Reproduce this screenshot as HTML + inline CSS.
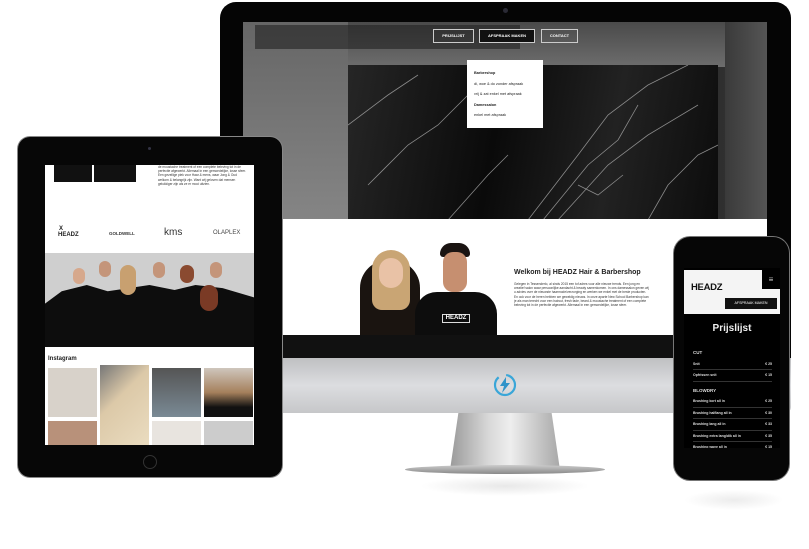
<!DOCTYPE html>
<html><head><meta charset="utf-8"><style>
*{margin:0;padding:0;box-sizing:border-box}
body{width:809px;height:549px;background:#fff;position:relative;overflow:hidden;font-family:"Liberation Sans",sans-serif}
.a{position:absolute}
.t{font-size:3.2px;line-height:4.2px;color:#333}
</style></head><body>

<!-- iMac stand -->
<div class="a" style="left:450px;top:410px;width:110px;height:60px;background:linear-gradient(90deg,#9a9a9a,#d8d8d8 35%,#eeeeee 55%,#a8a8a8);clip-path:polygon(8% 0,92% 0,100% 100%,0 100%)"></div>
<div class="a" style="left:405px;top:465px;width:200px;height:9px;border-radius:50%;background:linear-gradient(#ccc,#888)"></div>
<div class="a" style="left:420px;top:476px;width:170px;height:20px;border-radius:50%;background:radial-gradient(#e8e8e8,#fff 70%)"></div>

<!-- iMac body -->
<div class="a" style="left:220px;top:2px;width:571px;height:358px;background:#050505;border-radius:16px 16px 0 0"></div>
<div class="a" style="left:220px;top:358px;width:571px;height:55px;background:linear-gradient(#bfc0c2,#dcdde0 50%,#c6c7c9);border-radius:0 0 6px 6px"></div>
<div class="a" style="left:503px;top:8px;width:5px;height:5px;border-radius:50%;background:#2a2a35"></div>
<svg class="a" style="left:493px;top:373px" width="24" height="24" viewBox="0 0 24 24"><circle cx="12" cy="12" r="10" fill="none" stroke="#3aa6d8" stroke-width="2.2" stroke-dasharray="40 8"/><path d="M13 4 L7 13 H11 L9 20 L17 10 H13 Z" fill="#2f93c9"/></svg>

<!-- iMac screen -->
<div class="a" style="left:243px;top:22px;width:524px;height:198px;background:linear-gradient(90deg,#6c6c6c 0%,#8a8a8a 25%,#2a2a2a 45%,#141414 70%,#3a3a3a 100%)"></div>
<div class="a" style="left:243px;top:22px;width:524px;height:45px;background:linear-gradient(#4a4a4a,#6d6d6d)"></div>
<div class="a" style="left:348px;top:65px;width:370px;height:155px;background:linear-gradient(100deg,#262626,#0a0a0a 40%,#222 70%,#0c0c0c);"></div>
<svg class="a" style="left:348px;top:65px" width="370" height="155"><g stroke="#b0b0b0" stroke-width="0.8" fill="none" opacity="0.75"><path d="M0 60 L40 30 L70 10 M20 120 L60 80 L90 60 L130 20"/><path d="M180 155 L230 90 L260 50 L300 20 L340 0"/><path d="M195 155 L240 100 L270 75 L290 40"/><path d="M210 155 L260 100 L300 70 L350 40"/><path d="M100 155 L140 110 L160 90"/><path d="M300 155 L320 120 L350 90 L370 80"/><path d="M230 120 L250 130 L275 110"/></g></svg>
<div class="a" style="left:243px;top:22px;width:105px;height:198px;background:linear-gradient(#666,#858585)"></div>
<div class="a" style="left:725px;top:22px;width:42px;height:198px;background:linear-gradient(90deg,#3a3a3a,#555)"></div>
<div class="a" style="left:255px;top:25px;width:265px;height:24px;background:#222;opacity:.6"></div>
<!-- nav -->
<div class="a" style="left:433px;top:29px;width:41px;height:14px;border:1px solid #ccc;color:#fff;font-size:4px;text-align:center;line-height:12px;font-weight:bold">PRIJSLIJST</div>
<div class="a" style="left:479px;top:29px;width:56px;height:14px;border:1px solid #ccc;background:#111;color:#fff;font-size:4px;text-align:center;line-height:12px;font-weight:bold">AFSPRAAK MAKEN</div>
<div class="a" style="left:541px;top:29px;width:37px;height:14px;border:1px solid #ccc;color:#fff;font-size:4px;text-align:center;line-height:12px;font-weight:bold">CONTACT</div>
<div class="a" style="left:467px;top:60px;width:76px;height:68px;background:#fff;padding:8px 7px;font-size:3.8px;line-height:10.5px;color:#222">
<b>Barbershop</b><br>di, woe &amp; do zonder afspraak<br>vrij &amp; zat enkel met afspraak<br><b>Damessalon</b><br>enkel met afspraak</div>
<!-- white section -->
<div class="a" style="left:243px;top:219px;width:524px;height:117px;background:#fff"></div>
<div class="a" style="left:360px;top:260px;width:60px;height:76px;background:#1a1410;border-radius:28px 28px 0 0"></div>
<div class="a" style="left:372px;top:250px;width:38px;height:60px;background:#c9a574;border-radius:19px 19px 10px 10px"></div>
<div class="a" style="left:379px;top:258px;width:24px;height:30px;background:#e9c2a6;border-radius:12px"></div>
<div class="a" style="left:415px;top:292px;width:82px;height:44px;background:#0d0d0d;border-radius:22px 22px 0 0"></div>
<div class="a" style="left:440px;top:243px;width:30px;height:14px;background:#1a1412;border-radius:14px 14px 4px 4px"></div>
<div class="a" style="left:443px;top:252px;width:24px;height:40px;background:#c68f70;border-radius:10px"></div>
<div class="a" style="left:442px;top:314px;width:28px;height:9px;border:1px solid #ddd;color:#fff;font-size:6px;line-height:7px;text-align:center;font-weight:bold">HEADZ</div>
<div class="a" style="left:514px;top:269px;font-size:7px;font-weight:bold;color:#222">Welkom bij HEADZ Hair &amp; Barbershop</div>
<div class="a t" style="left:514px;top:282px;width:136px;height:53px;overflow:hidden">Gelegen in Tessenderlo, al sinds 2015 een tof adres voor alle nieuwe trends. Een jong en creatief salon waar persoonlijke aandacht &amp; beauty samenkomen. In ons damessalon geven wij u advies over de nieuwste haarmode/verzorging en werken we enkel met de beste producten. En ook voor de heren hebben we geweldig nieuws. In onze aparte New School Barbershop kan je als man terecht voor een haircut, fresh fade, beard &amp; moustache treatment of een complete beleving tot in de perfectie afgewerkt. Allemaal in een gemoedelijke, losse sfeer.</div>
<div class="a" style="left:243px;top:335px;width:524px;height:23px;background:#111"></div>

<!-- Tablet -->
<div class="a" style="left:18px;top:137px;width:264px;height:340px;background:#070707;border-radius:12px;box-shadow:0 0 0 1px #888"></div>
<div class="a" style="left:148px;top:147px;width:3px;height:3px;border-radius:50%;background:#334"></div>
<div class="a" style="left:143px;top:455px;width:14px;height:14px;border-radius:50%;border:1px solid #333"></div>
<div class="a" style="left:45px;top:165px;width:209px;height:280px;background:#fff;overflow:hidden">
 <div class="a" style="left:9px;top:0;width:38px;height:17px;background:#111"></div>
 <div class="a" style="left:49px;top:0;width:42px;height:17px;background:#111"></div>
 <div class="a t" style="left:113px;top:0;width:90px">de moustache treatment of een complete beleving tot in de perfectie afgewerkt. Allemaal in een gemoedelijke, losse sfeer. Een gezellige plek voor Haar &amp; mens, waar Jong &amp; Oud welkom &amp; belangrijk zijn. Want wij geloven dat mensen gelukkiger zijn als ze er mooi uitzien.</div>
 <div class="a" style="left:14px;top:61px;font-size:6px;font-weight:bold;color:#222">X<br></div>
 <div class="a" style="left:13px;top:67px;font-size:6px;font-weight:bold;color:#222">HEADZ</div>
 <div class="a" style="left:64px;top:66px;font-size:4.5px;font-weight:bold;color:#333">GOLDWELL</div>
 <div class="a" style="left:119px;top:62px;font-size:10px;color:#333">kms</div>
 <div class="a" style="left:168px;top:65px;font-size:6px;color:#444">OLAPLEX</div>
 <div class="a" style="left:0;top:88px;width:209px;height:94px;background:#cfcfcf"></div>
 <div class="a" style="left:0;top:120px;width:209px;height:62px;background:#0d0d0d;clip-path:polygon(0 30%,8% 10%,20% 0,30% 10%,40% 5%,50% 0,62% 8%,72% 0,85% 5%,100% 20%,100% 100%,0 100%)"></div>
 <div class="a" style="left:28px;top:103px;width:12px;height:16px;background:#d6a88c;border-radius:6px"></div>
 <div class="a" style="left:54px;top:96px;width:12px;height:16px;background:#c4957a;border-radius:6px"></div>
 <div class="a" style="left:75px;top:100px;width:16px;height:30px;background:#c8a070;border-radius:8px"></div>
 <div class="a" style="left:108px;top:97px;width:12px;height:16px;background:#c4957a;border-radius:6px"></div>
 <div class="a" style="left:135px;top:100px;width:14px;height:18px;background:#8a4a30;border-radius:7px"></div>
 <div class="a" style="left:165px;top:97px;width:12px;height:16px;background:#c4957a;border-radius:6px"></div>
 <div class="a" style="left:155px;top:120px;width:18px;height:26px;background:#7a3a25;border-radius:9px"></div>
 <div class="a" style="left:3px;top:191px;font-size:6px;font-weight:bold;color:#222">Instagram</div>
 <div class="a" style="left:3px;top:203px;width:49px;height:49px;background:#d8d2ca"></div>
 <div class="a" style="left:55px;top:200px;width:49px;height:80px;background:linear-gradient(135deg,#777,#dcc9a8 40%,#eadcc0)"></div>
 <div class="a" style="left:107px;top:203px;width:49px;height:49px;background:linear-gradient(#555,#7a8a95)"></div>
 <div class="a" style="left:159px;top:203px;width:49px;height:49px;background:linear-gradient(#cfc6bd,#a5805c 50%,#111 80%)"></div>
 <div class="a" style="left:3px;top:256px;width:49px;height:25px;background:#b8917a"></div>
 <div class="a" style="left:107px;top:256px;width:49px;height:25px;background:#e8e4df"></div>
 <div class="a" style="left:159px;top:256px;width:49px;height:25px;background:#ccc"></div>
</div>

<!-- Phone -->
<div class="a" style="left:674px;top:237px;width:115px;height:243px;background:#060606;border-radius:16px;box-shadow:0 0 0 1px #777"></div>
<div class="a" style="left:684px;top:268px;width:96px;height:180px;background:#000;overflow:hidden">
 <div class="a" style="left:0;top:2px;width:96px;height:44px;background:#f4f4f4"></div>
 <div class="a" style="left:78px;top:2px;width:18px;height:19px;background:#000;color:#ccc;font-size:8px;text-align:center;line-height:19px">≡</div>
 <div class="a" style="left:7px;top:14px;font-size:9.5px;font-weight:bold;color:#111;letter-spacing:-.3px">HEADZ</div>
 <div class="a" style="left:41px;top:30px;width:52px;height:11px;background:#111;color:#fff;font-size:3.6px;text-align:center;line-height:11px">AFSPRAAK MAKEN</div>
 <div class="a" style="left:0;top:55px;width:96px;text-align:center;font-size:10px;font-weight:bold;color:#eee">Prijslijst</div>
 <div class="a" style="left:9px;top:80px;width:79px;font-size:3.5px;color:#ddd;line-height:10.5px;font-weight:bold">
 <div style="font-size:4.5px">CUT</div>
 <div style="border-bottom:1px solid #333">Snit<span style="float:right">€ 25</span></div>
 <div style="border-bottom:1px solid #333">Opfrissen snit<span style="float:right">€ 15</span></div>
 <div style="font-size:4.5px;margin-top:4px">BLOWDRY</div>
 <div style="border-bottom:1px solid #333">Brushing kort all in<span style="float:right">€ 25</span></div>
 <div style="border-bottom:1px solid #333">Brushing halflang all in<span style="float:right">€ 30</span></div>
 <div style="border-bottom:1px solid #333">Brushing lang all in<span style="float:right">€ 33</span></div>
 <div style="border-bottom:1px solid #333">Brushing extra lang/dik all in<span style="float:right">€ 35</span></div>
 <div>Brushing wave all in<span style="float:right">€ 15</span></div>
 </div>
</div>
<div class="a" style="left:684px;top:490px;width:100px;height:20px;border-radius:50%;background:radial-gradient(#ececec,#fff 70%)"></div>
</body></html>
